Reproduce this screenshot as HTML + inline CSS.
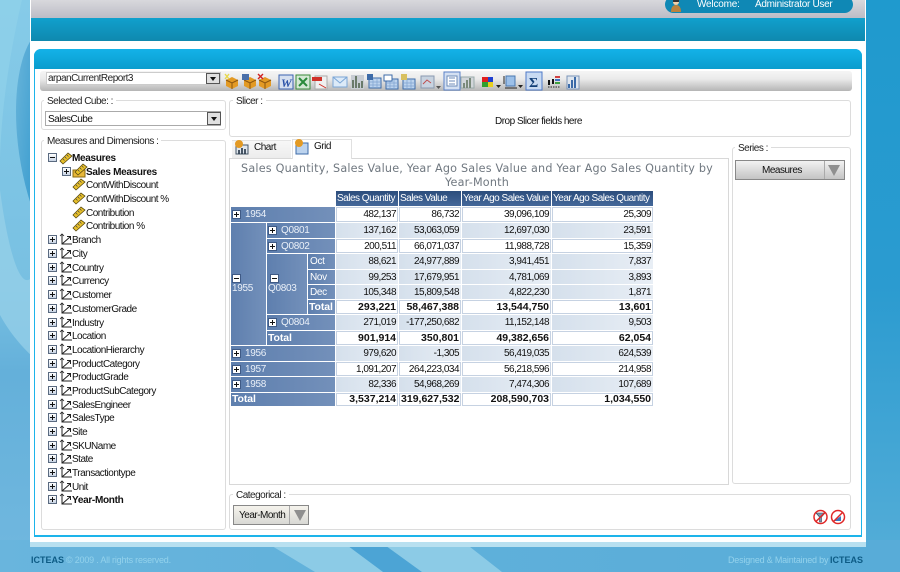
<!DOCTYPE html>
<html><head><meta charset="utf-8"><style>
html,body{margin:0;padding:0;width:900px;height:572px;overflow:hidden;background:#5fb0db}
body{position:relative;font-family:"Liberation Sans",sans-serif;font-size:10px;color:#111;letter-spacing:-.5px}
#pg{position:absolute;left:0;top:0;width:900px;height:572px;filter:blur(.3px)}
.a{position:absolute;box-sizing:border-box}
.t{position:absolute;white-space:nowrap;line-height:12px}
.fs{position:absolute;box-sizing:border-box;border:1px solid #dcdcdc;border-radius:3px;background:#fff}
.lg{position:absolute;background:#fff;padding:0 3px;left:2px;top:-5px;line-height:12px;white-space:nowrap;font-size:10px;color:#222}
.pm{position:absolute;width:7px;height:7px;border:1px solid #5a6a80;background:linear-gradient(#fff,#c8d4e4);top:3px}
.pm:before{content:"";position:absolute;left:1px;top:3px;width:5px;height:1px;background:#111}
.pm.p:after{content:"";position:absolute;left:3px;top:1px;width:1px;height:5px;background:#111}
.tree .t{margin-top:1.5px}
.tree .t.bd{letter-spacing:-.3px}
table{position:absolute;left:230px;top:190px;border-collapse:separate;border-spacing:1px;table-layout:fixed;width:424px;font-size:10px}
td,th{padding:0 2px 0 1px;overflow:hidden;white-space:nowrap;box-sizing:border-box;height:14px;line-height:11px}
tr.u td{height:15px}
th.h{height:15px;background:linear-gradient(#2c4d7c,#44689a);color:#fff;font-weight:normal;text-align:left;padding-left:1px}
td.b{background:linear-gradient(90deg,#5e7fae,#7390ba);color:#eaf0f8;position:relative;padding-left:14px;letter-spacing:-.3px}
td.m{padding-left:2px;color:#fff}
td.n{text-align:right;background:#fff;color:#111;border:1px solid #c6d2e2;padding-right:1px}
td.s{text-align:right;background:linear-gradient(90deg,#d5e0ec,#e8eef5);color:#111;padding-right:2px}
td.w{font-weight:bold;font-size:10.5px;letter-spacing:0}
td.lb{font-weight:bold;color:#fff;padding-left:1px;font-size:10.5px;letter-spacing:-.1px}
.x{position:absolute;left:1px;top:3px;width:9px;height:9px;box-sizing:border-box;background:#fff;border:1px solid #3f5a85}
.x:before{content:"";position:absolute;left:1px;top:3px;width:5px;height:1px;background:#111}
.x.p:after{content:"";position:absolute;left:3px;top:1px;width:1px;height:5px;background:#111}
.lbl{position:absolute;left:1px}
.drop{position:absolute;box-sizing:border-box;border:1px solid #888;background:linear-gradient(#f5f3ec,#d8d8d4)}
</style></head><body><div id="pg">

<svg class="a" style="left:0;top:0" width="900" height="572">
<defs>
<linearGradient id="lft" x1="0" y1="0" x2="0" y2="1"><stop offset="0" stop-color="#86cbe8"/><stop offset=".5" stop-color="#78c0e2"/><stop offset=".65" stop-color="#64b0da"/><stop offset="1" stop-color="#71b8df"/></linearGradient>
<linearGradient id="rgt" x1="0" y1="0" x2="0" y2="1"><stop offset="0" stop-color="#1f9ace"/><stop offset=".5" stop-color="#2b9bd0"/><stop offset="1" stop-color="#56aed8"/></linearGradient>
<linearGradient id="cres" x1="0" y1="0" x2="1" y2="1"><stop offset="0" stop-color="#68b4da"/><stop offset="1" stop-color="#3f9fd0"/></linearGradient>
<linearGradient id="ftr" x1="0" y1="0" x2="1" y2="0"><stop offset="0" stop-color="#69b5dd"/><stop offset=".5" stop-color="#5fb0da"/><stop offset="1" stop-color="#58acd8"/></linearGradient>
</defs>
<rect x="0" y="0" width="31" height="572" fill="url(#lft)"/>
<path d="M0 0H22C8 60 -2 130 0 190Z" fill="#90d1ea" opacity=".7"/>
<path d="M31 40C12 70 10 140 31 205Z" fill="url(#cres)"/>
<path d="M0 190C8 250 20 290 31 278V355C20 345 8 330 0 315Z" fill="#97d0e8" opacity=".75"/>
<rect x="866" y="0" width="34" height="572" fill="url(#rgt)"/>
<rect x="0" y="540" width="900" height="32" fill="url(#ftr)"/>
<path d="M344 543H382L422 572H383Z" fill="#4ca4d5"/>
<path d="M267 543H344L383 572H315Z" fill="#8ccbe6"/>
<path d="M382 543H465L502 572H422Z" fill="#8ccbe6"/>
<rect x="30" y="541" width="836" height="6" fill="#b8e0f0"/>
</svg>

<!-- white frame -->
<div class="a" style="left:30px;top:0;width:836px;height:542px;background:#fff"></div>
<div class="a" style="left:31px;top:0;width:834px;height:18px;background:linear-gradient(#d8d8dc,#bcbcc6)"></div>
<div class="a" style="left:31px;top:18px;width:834px;height:23px;background:linear-gradient(#10a0cd,#0f88ae)"></div>
<div class="a" style="left:665px;top:-4px;width:188px;height:17px;background:#0f88b5;border-radius:9px"></div>
<svg class="a" style="left:669px;top:0" width="14" height="13"><circle cx="7" cy="2" r="3" fill="#f2d0a8"/><path d="M4 0H10V2H4Z" fill="#333"/><path d="M2 12C2 7 4 5 7 5S12 7 12 12Z" fill="#b9823e"/></svg>
<div class="t" style="left:697px;top:-1px;color:#fff;letter-spacing:-.2px">Welcome:</div>
<div class="t" style="left:755px;top:-1px;color:#fff;letter-spacing:-.3px">Administrator User</div>

<!-- inner panel -->
<div class="a" style="left:34px;top:49px;width:828px;height:488px;border:1px solid #1db4ea;border-bottom-width:2px;border-radius:7px 7px 0 0;background:#fff"></div>
<div class="a" style="left:34px;top:49px;width:828px;height:20px;border-radius:7px 7px 0 0;background:linear-gradient(#13b2e8,#0a9ccd)"></div>

<!-- toolbar -->
<div class="a" style="left:40px;top:71px;width:812px;height:20px;border-radius:3px;background:linear-gradient(#f5f5f5,#eaeaea 40%,#b5b5b5)"></div>
<div class="a" style="left:46px;top:72px;width:175px;height:13px;background:#fff;border:1px solid #ccc"></div>
<div class="t" style="left:48px;top:73px;color:#222">arpanCurrentReport3</div>
<div class="a" style="left:206px;top:73px;width:14px;height:11px;background:#e0e0e0;border:1px solid #555"><div class="a" style="left:3px;top:3px;border:3px solid transparent;border-top:4px solid #111"></div></div>

<svg class="a" style="left:0;top:0" width="900" height="100">
<defs>
<g id="box"><path d="M1 5L7 2L13 5V11L7 14L1 11Z" fill="#e39a24"/><path d="M1 5L7 8L13 5M7 8V14" stroke="#8a5510" fill="none"/></g>
<g id="grd"><rect x="1" y="4" width="12" height="10" fill="#bcd3ee" stroke="#3d6ba8"/><path d="M1 8H13M1 11H13M5 4V14M9 4V14" stroke="#7fa3cf" stroke-width=".7"/></g>
</defs>
<use href="#box" x="225" y="75"/><path d="M225 74L229 79M229 74L225 79" stroke="#e8d84a" stroke-width="1.4"/>
<use href="#box" x="243" y="75"/><rect x="242" y="74" width="7" height="6" fill="#4a6fa8"/>
<use href="#box" x="258" y="75"/><path d="M258 74L263 79M263 74L258 79" stroke="#d02020" stroke-width="1.4"/>
<rect x="279" y="75" width="14" height="14" fill="#d6e0f0" stroke="#3a62b0"/><text x="281" y="87" font-family="Liberation Serif" font-weight="bold" font-style="italic" font-size="12" fill="#2a52a8">W</text>
<rect x="296" y="75" width="14" height="14" fill="#d4e8d4" stroke="#3a8a3a"/><path d="M299 78L307 86M307 78L299 86" stroke="#2a8a3a" stroke-width="2"/>
<rect x="315" y="76" width="12" height="13" fill="#f0f0f0" stroke="#aaa"/><path d="M312 77H322V81H312Z" fill="#d03028"/><path d="M319 84L326 88" stroke="#d03028"/>
<rect x="333" y="77" width="14" height="10" fill="#dceaf8" stroke="#7ba6d6"/><path d="M333 77L340 83L347 77" fill="none" stroke="#7ba6d6"/>
<rect x="351" y="75" width="13" height="14" fill="#c8cdd4"/><path d="M353 88V80M356 88V76M359 88V83M362 88V81" stroke="#6a7a6a" stroke-width="2"/>
<use href="#grd" x="368" y="74"/><rect x="367" y="74" width="6" height="6" fill="#3d6ba8"/>
<use href="#grd" x="385" y="75"/><rect x="384" y="75" width="8" height="6" fill="#fff" stroke="#3d6ba8"/>
<use href="#grd" x="402" y="75"/><rect x="401" y="74" width="6" height="6" fill="#d8c060"/>
<rect x="421" y="76" width="13" height="12" fill="#c8d3e0" stroke="#8a9ab0"/><path d="M423 84L427 80L431 83" stroke="#c05050" fill="none"/><path d="M436 86H441L438.500 89Z" fill="#555"/>
<rect x="444" y="72" width="16" height="18" fill="#d4e0f2" stroke="#5b82c8"/><rect x="447" y="76" width="10" height="10" fill="#fff" stroke="#6d8bb8"/><path d="M449 78H455M449 81H455M449 84H455" stroke="#6d8bb8"/>
<rect x="461" y="77" width="13" height="11" fill="#d2d6da" stroke="#9aa"/><path d="M464 88V83M467 88V80M470 88V78" stroke="#7a8a7a" stroke-width="2"/>
<rect x="482" y="77" width="6" height="5" fill="#e02020"/><rect x="488" y="77" width="5" height="5" fill="#2040d0"/><rect x="482" y="82" width="6" height="5" fill="#30a030"/><rect x="488" y="82" width="5" height="5" fill="#e8d020"/>
<path d="M496 85H501L498.500 88Z" fill="#222"/>
<rect x="506" y="76" width="9" height="10" fill="#9cc0e8" stroke="#4a78b0"/><path d="M504 76V84M505 88H517" stroke="#222"/><path d="M518 85H523L520.500 88Z" fill="#222"/>
<rect x="526" y="72" width="16" height="18" fill="#c8daf2" stroke="#4f7ac8"/><text x="529" y="87" font-family="Liberation Serif" font-weight="bold" font-size="14" fill="#123f78">Σ</text>
<path d="M548 87H560" stroke="#222" stroke-dasharray="1.500 1"/><path d="M549 80V85M553 79V84" stroke="#111" stroke-width="2"/><path d="M555 77H560" stroke="#d04040" stroke-width="2"/><path d="M555 80H560" stroke="#4070c0" stroke-width="2"/><path d="M555 83H560" stroke="#40a040" stroke-width="2"/>
<rect x="567" y="76" width="12" height="13" fill="#dfe6ee" stroke="#7a94b8"/><path d="M569 88V84M572 88V80M575 88V77" stroke="#3a6aa8" stroke-width="2"/>
</svg>

<!-- Selected cube -->
<div class="fs" style="left:41px;top:100px;width:185px;height:30px"><div class="lg">Selected Cube: :</div></div>
<div class="a" style="left:45px;top:111px;width:176px;height:15px;background:#fff;border:1px solid #aaa"></div>
<div class="t" style="left:48px;top:114px">SalesCube</div>
<div class="a" style="left:207px;top:112px;width:14px;height:13px;background:#e0e0e0;border:1px solid #555"><div class="a" style="left:3px;top:4px;border:3px solid transparent;border-top:4px solid #111"></div></div>

<!-- Slicer -->
<div class="fs" style="left:229px;top:100px;width:622px;height:37px"><div class="lg" style="left:3px">Slicer :</div></div>
<div class="t" style="left:495px;top:116px">Drop Slicer fields here</div>

<!-- Tree -->
<div class="fs" style="left:41px;top:140px;width:185px;height:390px"><div class="lg">Measures and Dimensions :</div></div>
<svg class="a" style="left:0;top:0" width="230" height="520">
<defs>
<g id="rl"><path d="M0 9L8 1L12 4L3 12Z" fill="#e8c02a" stroke="#5a4a10" stroke-width=".8"/><path d="M3 7L4.500 8.500M5 5L6.500 6.500M7 3L8.500 4.500" stroke="#444" stroke-width=".7"/></g>
<g id="ax"><path d="M2 0V10H12M2 10L10 3M7 2.500H10.500V6" fill="none" stroke="#222" stroke-width="1"/><path d="M0 2L2 0L4 2" fill="none" stroke="#222" stroke-width=".8"/></g>
</defs>
<use href="#rl" x="60" y="152"/>
<path d="M73 170H85V177H73Z" fill="#e8b83a" stroke="#8a6a10"/><use href="#rl" x="75" y="161" transform="translate(0,2)"/>
<use href="#rl" x="73" y="178"/><use href="#rl" x="73" y="192"/><use href="#rl" x="73" y="206"/><use href="#rl" x="73" y="219"/>
<use href="#ax" x="60" y="234"/><use href="#ax" x="60" y="248"/><use href="#ax" x="60" y="262"/><use href="#ax" x="60" y="275"/><use href="#ax" x="60" y="289"/><use href="#ax" x="60" y="303"/><use href="#ax" x="60" y="317"/><use href="#ax" x="60" y="330"/><use href="#ax" x="60" y="344"/><use href="#ax" x="60" y="358"/><use href="#ax" x="60" y="371"/><use href="#ax" x="60" y="385"/><use href="#ax" x="60" y="399"/><use href="#ax" x="60" y="412"/><use href="#ax" x="60" y="426"/><use href="#ax" x="60" y="440"/><use href="#ax" x="60" y="453"/><use href="#ax" x="60" y="467"/><use href="#ax" x="60" y="481"/><use href="#ax" x="60" y="494"/>
</svg>
<div class="a tree" style="left:0;top:0;width:230px;height:0">
<div class="pm" style="left:48px;top:153px"></div><div class="t bd" style="left:72px;top:151px;font-weight:bold">Measures</div>
<div class="pm p" style="left:62px;top:167px"></div><div class="t bd" style="left:86px;top:165px;font-weight:bold">Sales Measures</div>
<div class="t" style="left:86px;top:178px">ContWithDiscount</div>
<div class="t" style="left:86px;top:192px">ContWithDiscount %</div>
<div class="t" style="left:86px;top:206px">Contribution</div>
<div class="t" style="left:86px;top:219px">Contribution %</div>
<div class="pm p" style="left:48px;top:235px"></div><div class="t" style="left:72px;top:233px">Branch</div>
<div class="pm p" style="left:48px;top:249px"></div><div class="t" style="left:72px;top:247px">City</div>
<div class="pm p" style="left:48px;top:263px"></div><div class="t" style="left:72px;top:261px">Country</div>
<div class="pm p" style="left:48px;top:276px"></div><div class="t" style="left:72px;top:274px">Currency</div>
<div class="pm p" style="left:48px;top:290px"></div><div class="t" style="left:72px;top:288px">Customer</div>
<div class="pm p" style="left:48px;top:304px"></div><div class="t" style="left:72px;top:302px">CustomerGrade</div>
<div class="pm p" style="left:48px;top:318px"></div><div class="t" style="left:72px;top:316px">Industry</div>
<div class="pm p" style="left:48px;top:331px"></div><div class="t" style="left:72px;top:329px">Location</div>
<div class="pm p" style="left:48px;top:345px"></div><div class="t" style="left:72px;top:343px">LocationHierarchy</div>
<div class="pm p" style="left:48px;top:359px"></div><div class="t" style="left:72px;top:357px">ProductCategory</div>
<div class="pm p" style="left:48px;top:372px"></div><div class="t" style="left:72px;top:370px">ProductGrade</div>
<div class="pm p" style="left:48px;top:386px"></div><div class="t" style="left:72px;top:384px">ProductSubCategory</div>
<div class="pm p" style="left:48px;top:400px"></div><div class="t" style="left:72px;top:398px">SalesEngineer</div>
<div class="pm p" style="left:48px;top:413px"></div><div class="t" style="left:72px;top:411px">SalesType</div>
<div class="pm p" style="left:48px;top:427px"></div><div class="t" style="left:72px;top:425px">Site</div>
<div class="pm p" style="left:48px;top:441px"></div><div class="t" style="left:72px;top:439px">SKUName</div>
<div class="pm p" style="left:48px;top:454px"></div><div class="t" style="left:72px;top:452px">State</div>
<div class="pm p" style="left:48px;top:468px"></div><div class="t" style="left:72px;top:466px">Transactiontype</div>
<div class="pm p" style="left:48px;top:482px"></div><div class="t" style="left:72px;top:480px">Unit</div>
<div class="pm p" style="left:48px;top:495px"></div><div class="t bd" style="left:72px;top:493px;font-weight:bold">Year-Month</div>
</div>

<!-- Tabs and grid panel -->
<div class="a" style="left:229px;top:158px;width:500px;height:327px;border:1px solid #d8d8d8;background:#fff"></div>
<div class="a" style="left:232px;top:140px;width:59px;height:18px;background:linear-gradient(#f7f7f7,#ececec);border-top:1px solid #e4e4e4"></div>
<div class="a" style="left:292px;top:139px;width:60px;height:20px;background:#fff;border:1px solid #e0e0e0;border-bottom:0"></div>
<svg class="a" style="left:232px;top:138px" width="80" height="20"><rect x="4" y="7" width="12" height="9" fill="#dfe6ee" stroke="#456"/><path d="M7 16V12M10 16V10M13 16V11" stroke="#234" stroke-width="1.600"/><circle cx="7" cy="6" r="4" fill="#e39a24"/><rect x="64" y="5" width="12" height="11" fill="#bcd3ee" stroke="#3d6ba8"/><circle cx="67" cy="5" r="4" fill="#e39a24"/></svg>
<div class="t" style="left:254px;top:142px">Chart</div>
<div class="t" style="left:314px;top:141px">Grid</div>

<div class="a" style="left:232px;top:162px;width:490px;height:28px;text-align:center;font-family:'DejaVu Sans',sans-serif;font-size:11.2px;line-height:14px;color:#707880;letter-spacing:.2px">Sales Quantity, Sales Value, Year Ago Sales Value and Year Ago Sales Quantity by<br>Year-Month</div>

<table>
<colgroup><col style="width:35px"><col style="width:40px"><col style="width:27px"><col style="width:62px"><col style="width:62px"><col style="width:89px"><col style="width:101px"></colgroup>
<tr><td colspan="3" style="background:#fff;height:15px"></td><th class="h">Sales Quantity</th><th class="h">Sales Value</th><th class="h">Year Ago Sales Value</th><th class="h">Year Ago Sales Quantity</th></tr>
<tr class="u"><td class="b" colspan="3"><span class="x p"></span>1954</td><td class="n">482,137</td><td class="n">86,732</td><td class="n">39,096,109</td><td class="n">25,309</td></tr>
<tr class="u"><td class="b" rowspan="8"><span class="x" style="top:51px"></span><span class="lbl" style="top:60px">1955</span></td><td class="b" colspan="2"><span class="x p"></span>Q0801</td><td class="s">137,162</td><td class="s">53,063,059</td><td class="s">12,697,030</td><td class="s">23,591</td></tr>
<tr><td class="b" colspan="2"><span class="x p"></span>Q0802</td><td class="n">200,511</td><td class="n">66,071,037</td><td class="n">11,988,728</td><td class="n">15,359</td></tr>
<tr class="u"><td class="b" rowspan="4"><span class="x" style="top:20px;left:3px"></span><span class="lbl" style="top:29px">Q0803</span></td><td class="b m">Oct</td><td class="s">88,621</td><td class="s">24,977,889</td><td class="s">3,941,451</td><td class="s">7,837</td></tr>
<tr><td class="b m">Nov</td><td class="s">99,253</td><td class="s">17,679,951</td><td class="s">4,781,069</td><td class="s">3,893</td></tr>
<tr><td class="b m">Dec</td><td class="s">105,348</td><td class="s">15,809,548</td><td class="s">4,822,230</td><td class="s">1,871</td></tr>
<tr><td class="b lb">Total</td><td class="n w">293,221</td><td class="n w">58,467,388</td><td class="n w">13,544,750</td><td class="n w">13,601</td></tr>
<tr class="u"><td class="b" colspan="2"><span class="x p"></span>Q0804</td><td class="s">271,019</td><td class="s">-177,250,682</td><td class="s">11,152,148</td><td class="s">9,503</td></tr>
<tr><td class="b lb" colspan="2">Total</td><td class="n w">901,914</td><td class="n w">350,801</td><td class="n w">49,382,656</td><td class="n w">62,054</td></tr>
<tr class="u"><td class="b" colspan="3"><span class="x p"></span>1956</td><td class="s">979,620</td><td class="s">-1,305</td><td class="s">56,419,035</td><td class="s">624,539</td></tr>
<tr><td class="b" colspan="3"><span class="x p"></span>1957</td><td class="n">1,091,207</td><td class="n">264,223,034</td><td class="n">56,218,596</td><td class="n">214,958</td></tr>
<tr class="u"><td class="b" colspan="3"><span class="x p"></span>1958</td><td class="s">82,336</td><td class="s">54,968,269</td><td class="s">7,474,306</td><td class="s">107,689</td></tr>
<tr><td class="b lb" colspan="3" style="height:13px">Total</td><td class="n w" style="height:13px">3,537,214</td><td class="n w" style="height:13px">319,627,532</td><td class="n w" style="height:13px">208,590,703</td><td class="n w" style="height:13px">1,034,550</td></tr>
</table>

<!-- Series -->
<div class="fs" style="left:732px;top:147px;width:119px;height:337px"><div class="lg" style="left:2px">Series :</div></div>
<div class="drop" style="left:735px;top:160px;width:110px;height:20px;background:linear-gradient(#f2f2f2,#c4c4c4)"></div>
<div class="a" style="left:824px;top:161px;width:1px;height:18px;background:#aaa"></div>
<div class="a" style="left:828px;top:165px;border:6px solid transparent;border-top:11px solid #8f8f8f;border-bottom:0"></div>
<div class="t" style="left:762px;top:165px">Measures</div>

<!-- Categorical -->
<div class="fs" style="left:229px;top:494px;width:622px;height:36px"><div class="lg" style="left:3px">Categorical :</div></div>
<div class="drop" style="left:233px;top:505px;width:76px;height:20px"></div>
<div class="a" style="left:289px;top:506px;width:1px;height:18px;background:#aaa"></div>
<div class="a" style="left:294px;top:510px;border:6px solid transparent;border-top:11px solid #8f8f8f;border-bottom:0"></div>
<div class="t" style="left:239px;top:510px">Year-Month</div>
<svg class="a" style="left:812px;top:508px" width="36" height="18">
<circle cx="8.500" cy="9" r="6.500" fill="#fff"/><path d="M4 5H13L9.500 9V14H7.500V9Z" fill="#7a95b0" stroke="#345" stroke-width=".6"/><circle cx="8.500" cy="9" r="6.500" fill="none" stroke="#e02828" stroke-width="1.500"/><path d="M4 13.500L13 4.500" stroke="#e02828" stroke-width="1.500"/>
<circle cx="26" cy="9" r="6.500" fill="#fff"/><path d="M22 13L29 8V13Z" fill="#3a7ac0"/><circle cx="26" cy="9" r="6.500" fill="none" stroke="#e02828" stroke-width="1.500"/><path d="M21.500 13.500L30.500 4.500" stroke="#e02828" stroke-width="1.500"/>
</svg>

<!-- footer -->
<div class="t" style="left:31px;top:554px;font-size:9px;font-weight:bold;color:#0d5b85;letter-spacing:0">ICTEAS</div>
<div class="t" style="left:66px;top:554px;font-size:9px;color:#93d2ec;letter-spacing:-.2px">© 2009 . All rights reserved.</div>
<div class="t" style="left:728px;top:554px;font-size:9px;color:#93d2ec;letter-spacing:-.2px">Designed &amp; Maintained by</div>
<div class="t" style="left:830px;top:554px;font-size:9px;font-weight:bold;color:#0d5b85;letter-spacing:0">ICTEAS</div>
</div></body></html>
